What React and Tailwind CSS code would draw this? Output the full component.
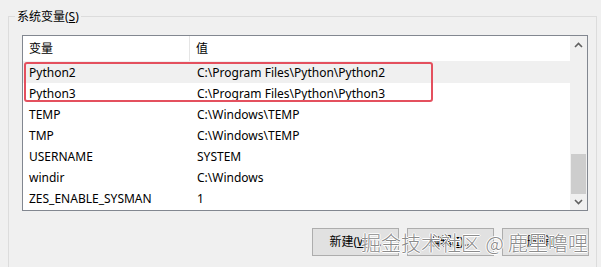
import React from "react";

const rows = [
  ["Python2", "C:\\Program Files\\Python\\Python2", true],
  ["Python3", "C:\\Program Files\\Python\\Python3", false],
  ["TEMP", "C:\\Windows\\TEMP", false],
  ["TMP", "C:\\Windows\\TEMP", false],
  ["USERNAME", "SYSTEM", false],
  ["windir", "C:\\Windows", false],
  ["ZES_ENABLE_SYSMAN", "1", false],
];

const font = { fontFamily: '"Noto Sans", "Noto Sans CJK SC", sans-serif' };

function Chevron({ up }) {
  return (
    <svg width="9" height="6" viewBox="0 0 9 6" className="block">
      <path
        d={up ? "M1 5 L4.5 1.5 L8 5" : "M1 1 L4.5 4.5 L8 1"}
        fill="none"
        stroke="#606060"
        strokeWidth="1.6"
      />
    </svg>
  );
}

export default function App() {
  return (
    <div
      className="relative w-[601px] h-[267px] overflow-hidden bg-[#f0f0f0] text-[12px] text-black"
      style={font}
    >
      <fieldset className="ml-[8px] mt-[8px] w-[589px] h-[280px] border border-[#dcdcdc] p-0 m-0">
        <legend className="ml-[6px] px-[2px] text-[12px] leading-[17px] text-[#000]">
          系统变量(<span className="underline">S</span>)
        </legend>
        <div className="relative ml-[13px] mt-[10px] w-[566px] h-[176px] border border-[#828790] bg-white flex">
          <div className="flex-1 flex flex-col">
            <div className="h-[26px] flex items-center border-b border-[#f0f0f0]">
              <div className="w-[167px] pl-[6px] h-full flex items-center border-r border-[#e5e5e5]">
                变量
              </div>
              <div className="pl-[6px]">值</div>
            </div>
            {rows.map(([k, v, sel]) => (
              <div
                key={k}
                className={
                  "h-[21px] flex items-center " + (sel ? "bg-[#f0f0f0]" : "")
                }
              >
                <div className="w-[168px] pl-[6px]">{k}</div>
                <div className="pl-[6px]">{v}</div>
              </div>
            ))}
          </div>
          <div className="w-[17px] bg-[#f0f0f0] flex flex-col items-center">
            <div className="h-[17px] w-full flex items-center justify-center mt-[1px]">
              <Chevron up />
            </div>
            <div className="flex-1 w-full px-[1px] flex flex-col">
              <div className="h-[100px]" />
              <div className="h-[40px] bg-[#cdcdcd]" />
            </div>
            <div className="h-[17px] w-full flex items-center justify-center">
              <Chevron />
            </div>
          </div>
          <div className="absolute left-[1px] top-[26px] w-[409px] h-[40px] border-2 border-[#e4505e] rounded-[3px]" />
        </div>
        <div className="ml-[303px] mt-[17px] flex gap-[8px]">
          <button className="w-[87px] h-[28px] bg-[#e1e1e1] border border-[#adadad] text-[12px]">
            新建(<span className="underline">W</span>)...
          </button>
          <button className="w-[87px] h-[28px] bg-[#e1e1e1] border border-[#adadad] text-[12px]">
            编辑(<span className="underline">I</span>)...
          </button>
          <button className="w-[87px] h-[28px] bg-[#e1e1e1] border border-[#adadad] text-[12px]">
            删除(<span className="underline">L</span>)
          </button>
        </div>
      </fieldset>
      <div
        className="absolute left-[361px] top-[229px] text-[20px] leading-[28px] text-[#8c8c8c] whitespace-nowrap"
        style={{
          fontFamily: '"Noto Sans CJK SC", sans-serif',
          fontWeight: 300,
          textShadow:
            "1px 0 0 #fff, -1px 0 0 #fff, 0 1px 0 #fff, 0 -1px 0 #fff",
        }}
      >
        掘金技术社区 @ 鹿里噜哩
      </div>
    </div>
  );
}
